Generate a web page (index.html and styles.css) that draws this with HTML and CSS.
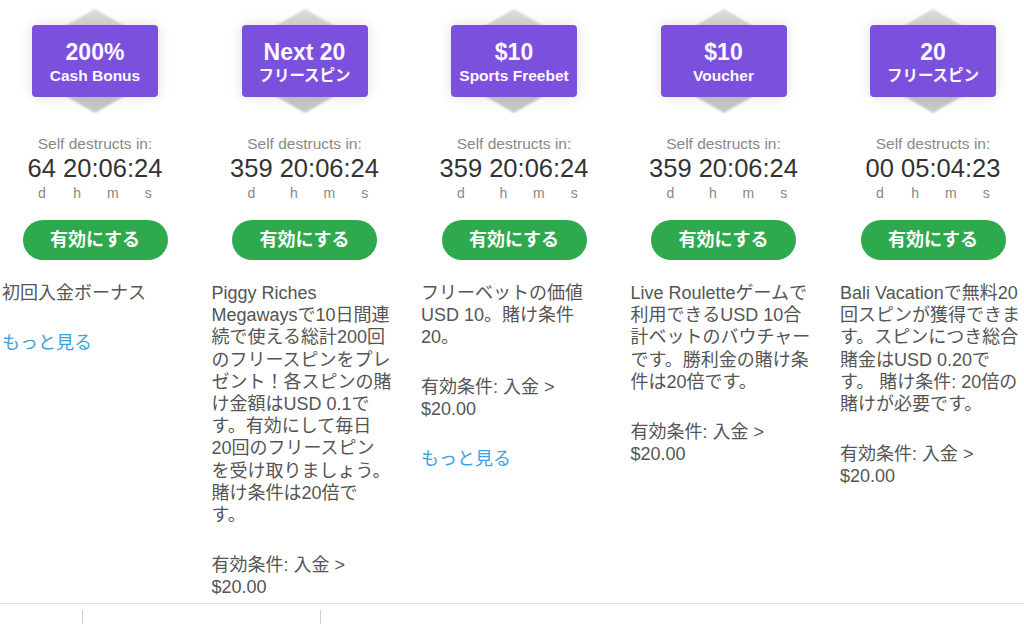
FILE: index.html
```html
<!DOCTYPE html>
<html lang="ja">
<head>
<meta charset="utf-8">
<title>Bonuses</title>
<link rel="stylesheet" href="styles.css">
</head>
<body>
<div class="cols">
  <div class="col">
    <div class="badge-wrap">
      <svg class="hex" width="92" height="106" viewBox="0 0 92 106"><defs><linearGradient id="g1" x1="0" y1="0" x2="0" y2="1"><stop offset="0" stop-color="#dadada"/><stop offset="1" stop-color="#c6c6c6"/></linearGradient><filter id="b1"><feGaussianBlur stdDeviation="1.2"/></filter></defs><polygon points="46,1 91,27 91,79 46,105 1,79 1,27" fill="url(#g1)" filter="url(#b1)"/></svg>
      <div class="badge"><div class="b-title">200%</div><div class="b-sub">Cash Bonus</div></div>
    </div>
    <div class="expires">Self destructs in:</div>
    <div class="timer"><div class="unit"><span class="num">64</span><span class="lbl">d</span></div><span class="sep">&nbsp;</span><div class="unit"><span class="num">20</span><span class="lbl">h</span></div><span class="sep">:</span><div class="unit"><span class="num">06</span><span class="lbl">m</span></div><span class="sep">:</span><div class="unit"><span class="num">24</span><span class="lbl">s</span></div></div>
    <div class="btn">有効にする</div>
    <div class="desc">
      <p>初回入金ボーナス</p>
      <p class="more">もっと見る</p>
    </div>
  </div>
  <div class="col">
    <div class="badge-wrap">
      <svg class="hex" width="92" height="106" viewBox="0 0 92 106"><defs><linearGradient id="g2" x1="0" y1="0" x2="0" y2="1"><stop offset="0" stop-color="#dadada"/><stop offset="1" stop-color="#c6c6c6"/></linearGradient><filter id="b2"><feGaussianBlur stdDeviation="1.2"/></filter></defs><polygon points="46,1 91,27 91,79 46,105 1,79 1,27" fill="url(#g2)" filter="url(#b2)"/></svg>
      <div class="badge"><div class="b-title">Next 20</div><div class="b-sub">フリースピン</div></div>
    </div>
    <div class="expires">Self destructs in:</div>
    <div class="timer"><div class="unit"><span class="num">359</span><span class="lbl">d</span></div><span class="sep">&nbsp;</span><div class="unit"><span class="num">20</span><span class="lbl">h</span></div><span class="sep">:</span><div class="unit"><span class="num">06</span><span class="lbl">m</span></div><span class="sep">:</span><div class="unit"><span class="num">24</span><span class="lbl">s</span></div></div>
    <div class="btn">有効にする</div>
    <div class="desc">
      <p>Piggy Riches Megawaysで10日間連続で使える総計200回のフリースピンをプレゼント！各スピンの賭け金額はUSD 0.1です。有効にして毎日<br>20回のフリースピン<br>を受け取りましょう。<br>賭け条件は20倍で<br>す。</p>
      <p>有効条件: 入金 &gt; $20.00</p>
    </div>
  </div>
  <div class="col">
    <div class="badge-wrap">
      <svg class="hex" width="92" height="106" viewBox="0 0 92 106"><defs><linearGradient id="g3" x1="0" y1="0" x2="0" y2="1"><stop offset="0" stop-color="#dadada"/><stop offset="1" stop-color="#c6c6c6"/></linearGradient><filter id="b3"><feGaussianBlur stdDeviation="1.2"/></filter></defs><polygon points="46,1 91,27 91,79 46,105 1,79 1,27" fill="url(#g3)" filter="url(#b3)"/></svg>
      <div class="badge"><div class="b-title">$10</div><div class="b-sub">Sports Freebet</div></div>
    </div>
    <div class="expires">Self destructs in:</div>
    <div class="timer"><div class="unit"><span class="num">359</span><span class="lbl">d</span></div><span class="sep">&nbsp;</span><div class="unit"><span class="num">20</span><span class="lbl">h</span></div><span class="sep">:</span><div class="unit"><span class="num">06</span><span class="lbl">m</span></div><span class="sep">:</span><div class="unit"><span class="num">24</span><span class="lbl">s</span></div></div>
    <div class="btn">有効にする</div>
    <div class="desc">
      <p>フリーベットの価値USD 10。賭け条件20。</p>
      <p>有効条件: 入金 &gt; $20.00</p>
      <p class="more">もっと見る</p>
    </div>
  </div>
  <div class="col">
    <div class="badge-wrap">
      <svg class="hex" width="92" height="106" viewBox="0 0 92 106"><defs><linearGradient id="g4" x1="0" y1="0" x2="0" y2="1"><stop offset="0" stop-color="#dadada"/><stop offset="1" stop-color="#c6c6c6"/></linearGradient><filter id="b4"><feGaussianBlur stdDeviation="1.2"/></filter></defs><polygon points="46,1 91,27 91,79 46,105 1,79 1,27" fill="url(#g4)" filter="url(#b4)"/></svg>
      <div class="badge"><div class="b-title">$10</div><div class="b-sub">Voucher</div></div>
    </div>
    <div class="expires">Self destructs in:</div>
    <div class="timer"><div class="unit"><span class="num">359</span><span class="lbl">d</span></div><span class="sep">&nbsp;</span><div class="unit"><span class="num">20</span><span class="lbl">h</span></div><span class="sep">:</span><div class="unit"><span class="num">06</span><span class="lbl">m</span></div><span class="sep">:</span><div class="unit"><span class="num">24</span><span class="lbl">s</span></div></div>
    <div class="btn">有効にする</div>
    <div class="desc">
      <p>Live Rouletteゲームで利用できるUSD 10合計ベットのバウチャーです。勝利金の賭け条件は20倍です。</p>
      <p>有効条件: 入金 &gt; $20.00</p>
    </div>
  </div>
  <div class="col">
    <div class="badge-wrap">
      <svg class="hex" width="92" height="106" viewBox="0 0 92 106"><defs><linearGradient id="g5" x1="0" y1="0" x2="0" y2="1"><stop offset="0" stop-color="#dadada"/><stop offset="1" stop-color="#c6c6c6"/></linearGradient><filter id="b5"><feGaussianBlur stdDeviation="1.2"/></filter></defs><polygon points="46,1 91,27 91,79 46,105 1,79 1,27" fill="url(#g5)" filter="url(#b5)"/></svg>
      <div class="badge"><div class="b-title">20</div><div class="b-sub">フリースピン</div></div>
    </div>
    <div class="expires">Self destructs in:</div>
    <div class="timer"><div class="unit"><span class="num">00</span><span class="lbl">d</span></div><span class="sep">&nbsp;</span><div class="unit"><span class="num">05</span><span class="lbl">h</span></div><span class="sep">:</span><div class="unit"><span class="num">04</span><span class="lbl">m</span></div><span class="sep">:</span><div class="unit"><span class="num">23</span><span class="lbl">s</span></div></div>
    <div class="btn">有効にする</div>
    <div class="desc">
      <p>Bali Vacationで無料20回スピンが獲得できます。スピンにつき総合賭金はUSD 0.20です。 賭け条件: 20倍の賭けが必要です。</p>
      <p>有効条件: 入金 &gt; $20.00</p>
    </div>
  </div>
</div>
<div class="footer">
  <div class="f-cell f-first"></div>
  <div class="f-cell f-second"></div>
  <div class="f-cell f-rest"></div>
</div>
</body>
</html>
```
FILE: styles.css
```css
html, body {
  margin: 0;
  padding: 0;
  overflow: hidden;
  background: #fff;
}
body {
  font-family: "Liberation Sans", "Noto Sans CJK JP", sans-serif;
  color: #555;
  width: 1024px;
  height: 624px;
}
.cols {
  display: flex;
  gap: 23.5px;
  padding-left: 2px;
  padding-bottom: 5px;
  align-items: flex-start;
}
.col {
  width: 186px;
  flex: 0 0 186px;
  display: flex;
  flex-direction: column;
  align-items: center;
}
.badge-wrap {
  position: relative;
  margin-top: 8px;
  height: 106px;
  width: 126px;
  box-sizing: border-box;
  padding-top: 17px;
}
.hex {
  position: absolute;
  top: 0;
  left: 17px;
}
.badge {
  position: relative;
  width: 126px;
  height: 72px;
  border-radius: 4px;
  background: #7b50dd;
  color: #fbf8ff;
  text-align: center;
  box-sizing: border-box;
  padding-top: 14px;
  box-shadow: 0 0 14px rgba(0, 0, 0, 0.13);
  font-weight: bold;
}
.b-title {
  font-size: 23px;
  line-height: 26px;
}
.b-sub {
  font-size: 15.5px;
  line-height: 21px;
}
.expires {
  margin-top: 21px;
  font-size: 15.5px;
  line-height: 18px;
  color: #888;
}
.timer {
  display: flex;
  align-items: flex-start;
  justify-content: center;
  font-size: 25.5px;
  line-height: 30px;
  color: #333;
}
.unit {
  display: flex;
  flex-direction: column;
  align-items: center;
}
.lbl {
  margin-top: 2px;
  font-size: 14px;
  line-height: 16px;
  color: #888;
}
.btn {
  margin-top: 19px;
  width: 145px;
  height: 40px;
  border-radius: 20px;
  background: #2ea94d;
  color: #fff;
  font-weight: bold;
  font-size: 18px;
  line-height: 40px;
  text-align: center;
}
.desc {
  align-self: flex-start;
  width: 181px;
  margin-top: 22px;
  font-size: 18px;
  line-height: 22.2px;
  color: #555;
}
.desc p {
  margin: 0 0 27.5px 0;
}
.desc p:last-child {
  margin-bottom: 0;
}
.desc .more {
  color: #3ba2de;
}
.footer {
  display: flex;
  border-top: 1px solid #e2e2e2;
}
.f-cell {
  margin-top: 6px;
  height: 30px;
}
.f-first {
  width: 82px;
}
.f-second {
  width: 237px;
  border-left: 1px solid #cfcfcf;
}
.f-rest {
  flex: 1;
  border-left: 1px solid #cfcfcf;
}
```
